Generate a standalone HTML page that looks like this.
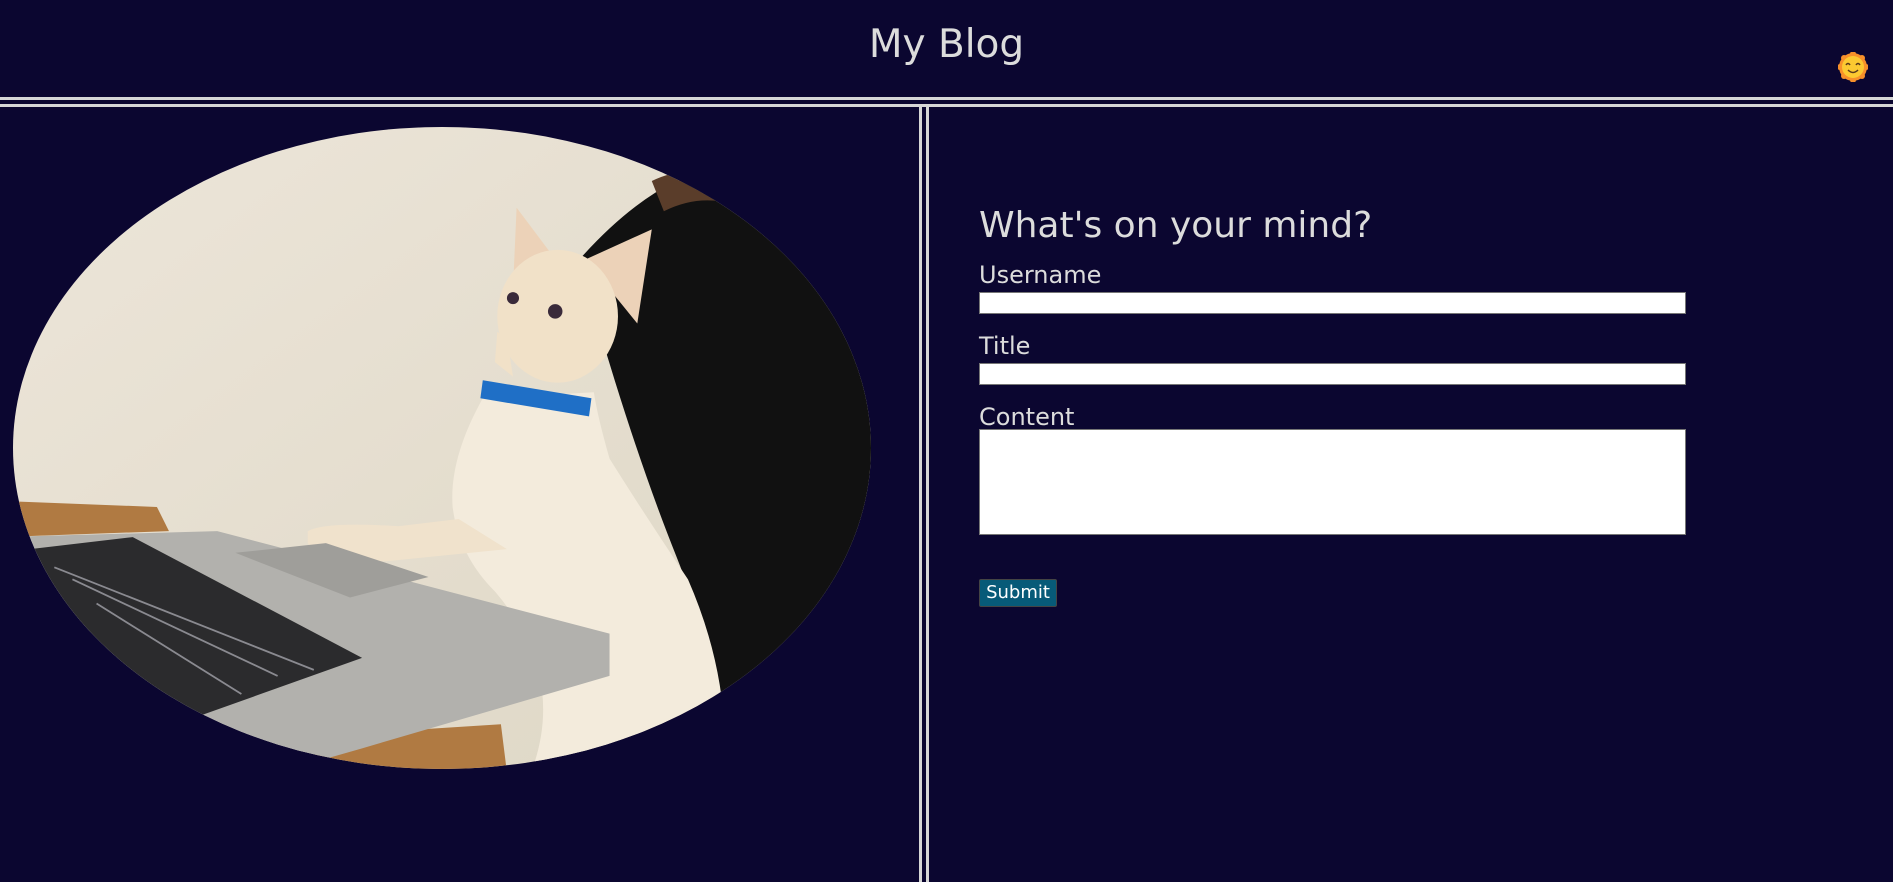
<!DOCTYPE html>
<html><head><meta charset="utf-8"><style>
html,body{margin:0;padding:0;background:#0b0630;width:1893px;height:882px;overflow:hidden;font-family:"DejaVu Sans",sans-serif;color:#dcdcdc}
.abs{position:absolute}
h1{position:absolute;left:0;width:1893px;text-align:center;top:20px;margin:0;font-weight:normal;font-size:39px;line-height:50px}
.hl{position:absolute;left:0;width:1893px;height:3px;background:#d6d6d6}
.vl{position:absolute;top:104px;width:3px;height:778px;background:#d6d6d6}
.lbl{position:absolute;left:979px;font-size:24px;line-height:28px}
.inp{position:absolute;left:979px;width:705px;background:#fff;border:1px solid #767676}
</style></head><body>
<h1>My Blog</h1>
<svg class="abs" style="left:1838px;top:52px" width="30" height="30" viewBox="0 0 30 30">
<g fill="#f7902a"><circle cx="15" cy="15" r="14"/></g>
<g fill="#f7902a">
<circle cx="15" cy="2" r="3"/><circle cx="15" cy="28" r="3"/><circle cx="2" cy="15" r="3"/><circle cx="28" cy="15" r="3"/>
<circle cx="6" cy="6" r="3"/><circle cx="24" cy="6" r="3"/><circle cx="6" cy="24" r="3"/><circle cx="24" cy="24" r="3"/></g>
<circle cx="15" cy="15" r="11" fill="#fcc931"/>
<path d="M8 13q2-3 4 0M18 13q2-3 4 0M10 18q5 5 10 0" stroke="#5a3a1a" stroke-width="1.5" fill="none"/>
</svg>
<div class="hl" style="top:97px"></div>
<div class="hl" style="top:104px"></div>
<div class="vl" style="left:919px"></div>
<div class="vl" style="left:926px"></div>

<svg class="abs" style="left:0;top:0" width="920" height="882" viewBox="0 0 920 882">
<defs><clipPath id="c"><ellipse cx="442" cy="448" rx="429" ry="321"/></clipPath>
<linearGradient id="w" x1="0" y1="0" x2="1" y2="1"><stop offset="0" stop-color="#ede6da"/><stop offset="1" stop-color="#ddd6c4"/></linearGradient></defs>
<g clip-path="url(#c)"><g transform="scale(1.207)">
<rect x="0" y="100" width="730" height="540" fill="url(#w)"/>
<path d="M480 215 Q520 170 560 150 Q600 140 640 170 L730 260 L730 640 L590 640 Q600 560 560 460 Q520 360 480 215Z" fill="#111"/>
<path d="M540 150 Q570 135 600 150 L610 170 Q580 160 550 175Z" fill="#5a3d2a"/>
<path d="M0 415 L130 420 L140 440 L0 445Z" fill="#b07a42"/>
<path d="M260 610 L415 600 L420 640 L260 640Z" fill="#b07a42"/>
<path d="M400 330 Q372 380 375 420 Q380 460 410 490 Q470 560 440 640 L600 640 Q605 560 570 480 Q530 420 505 380 Q495 345 492 325Z" fill="#f3ebdc"/>
<path d="M425 240 L428 172 L458 212 Z" fill="#ecd2b8"/>
<path d="M485 215 L540 190 L528 268 Z" fill="#ecd2b8"/>
<ellipse cx="462" cy="262" rx="50" ry="55" fill="#f1e1c8"/>
<path d="M412 275 L410 300 L425 312 L420 280Z" fill="#f1e1c8"/>
<circle cx="425" cy="247" r="5" fill="#3a2a3a"/><circle cx="460" cy="258" r="6" fill="#3a2a3a"/>
<path d="M400 315 L490 330 L488 345 L398 330Z" fill="#1f6fc6"/>
<path d="M255 440 Q270 432 330 436 L380 430 L420 455 L320 465 Q265 465 255 450Z" fill="#f0e2cc"/>
<path d="M0 445 L180 440 L505 525 L505 560 L300 620 L230 640 L0 640Z" fill="#b2b1ad"/>
<path d="M195 458 L270 450 L355 478 L290 495 Z" fill="#9f9e9a"/>
<path d="M25 455 L110 445 L300 545 L160 595 L60 525Z" fill="#2b2b2d"/>
<path d="M60 480 L230 560 M45 470 L260 555 M80 500 L200 575" stroke="#8a8a90" stroke-width="1.5"/>
</g></g></svg>

<div class="abs" style="left:979px;top:203px;font-size:36px;line-height:46px">What's on your mind?</div>
<div class="lbl" style="top:261px">Username</div>
<div class="inp" style="top:292px;height:20px"></div>
<div class="lbl" style="top:332px">Title</div>
<div class="inp" style="top:363px;height:20px"></div>
<div class="lbl" style="top:403px">Content</div>
<div class="inp" style="top:429px;height:104px"></div>
<div class="abs" style="left:979px;top:579px;width:76px;height:26px;background:#075a78;border:1px solid #444;border-radius:2px;color:#fff;font-size:18px;line-height:26px;text-align:center">Submit</div>
</body></html>
